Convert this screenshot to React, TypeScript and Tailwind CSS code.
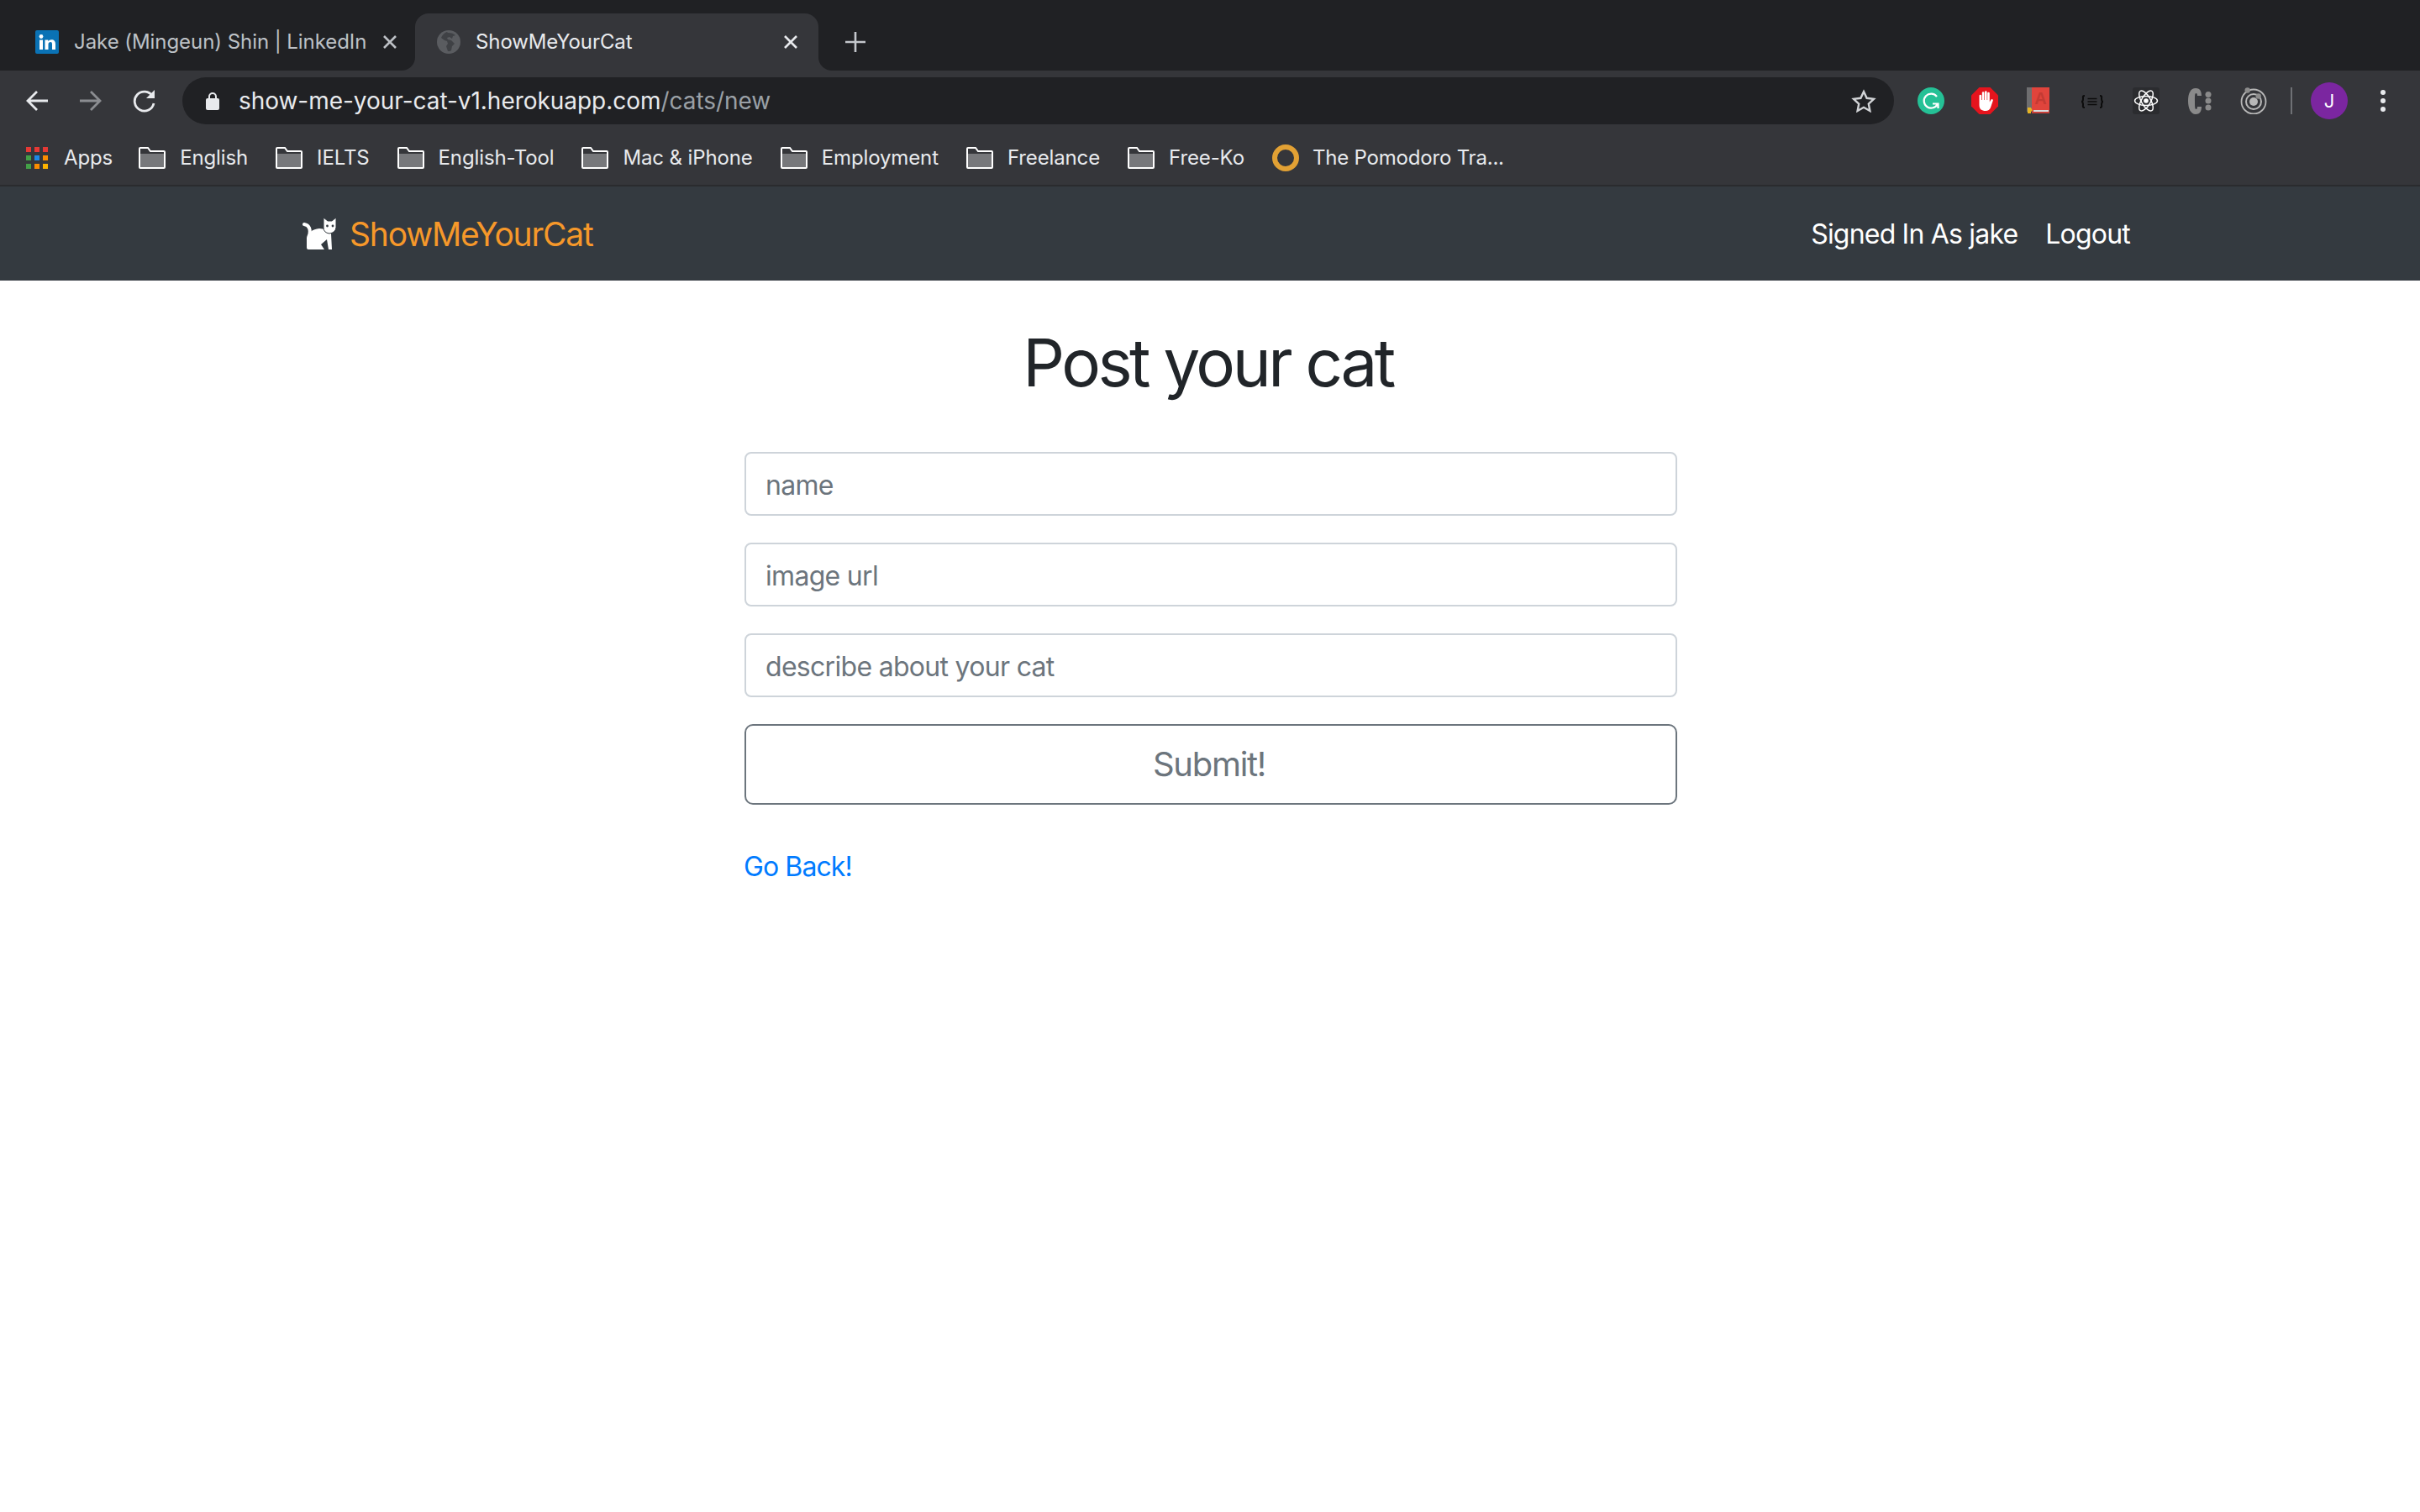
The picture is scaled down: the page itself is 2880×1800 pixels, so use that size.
import React from "react";

const bookmarks = ["English", "IELTS", "English-Tool", "Mac & iPhone", "Employment", "Freelance", "Free-Ko"];

const appsColors = [
  "bg-[#e53935]", "bg-[#e53935]", "bg-[#e53935]",
  "bg-[#43a047]", "bg-[#1e88e5]", "bg-[#fb8c00]",
  "bg-[#43a047]", "bg-[#fb8c00]", "bg-[#fdb300]",
];

const CloseIcon = ({ className }: { className: string }) => (
  <svg width="18" height="18" viewBox="0 0 18 18" className={className} fill="none" stroke="currentColor" strokeWidth="2.6">
    <path d="M2 2l14 14M16 2L2 16" />
  </svg>
);

const FolderIcon = () => (
  <svg width="32" height="26" viewBox="0 0 32 26" className="shrink-0">
    <path d="M1 24V2a1 1 0 0 1 1-1h9l3 4h16a1 1 0 0 1 1 1v18a1 1 0 0 1-1 1H2a1 1 0 0 1-1-1z" fill="#35363a" stroke="#fff" strokeWidth="2" />
    <rect x="2" y="8" width="28" height="16" fill="#77787b" />
  </svg>
);

const CatLogo = () => (
  <svg width="40" height="39" viewBox="0 0 40 39" className="shrink-0">
    <path d="M2 8c6 1 8 6 6 14" fill="none" stroke="#fff" strokeWidth="4" strokeLinecap="round" />
    <path d="M5 36V24c1-6 7-10 15-11l8 1 6 5 1 19h-4l-2-12-7 6 4 6H7q-2 0-2-2z" fill="#fff" />
    <path d="M25 0l5 4h5l5-4v12q-1 6-8 7-7-1-7-7z" fill="#fff" stroke="#343a40" strokeWidth="1" />
    <circle cx="29.5" cy="10" r="1.4" fill="#343a40" />
    <circle cx="36" cy="10" r="1.4" fill="#343a40" />
  </svg>
);

const ExtensionIcons = () => (
  <div className="flex items-center gap-[32px]">
    {/* grammarly */}
    <svg width="32" height="32" viewBox="0 0 32 32">
      <circle cx="16" cy="16" r="16" fill="#25c196" />
      <path d="M23 11A8.500 8.500 0 1 0 24 19.500M18 19.500h6.500V25" fill="none" stroke="#fff" strokeWidth="2.200" />
    </svg>
    {/* adblock */}
    <svg width="32" height="32" viewBox="0 0 32 32">
      <path d="M9.5 0h13L32 9.500v13L22.500 32h-13L0 22.500v-13z" fill="#e5141d" />
      <path d="M9.500 10a1.300 1.300 0 0 1 2.600 0v5h.7V6.500a1.300 1.300 0 0 1 2.600 0V15h.6V5.500a1.300 1.300 0 0 1 2.600 0V15h.6V7a1.300 1.300 0 0 1 2.600 0v10.500l1.800-3a1.300 1.300 0 0 1 2.200 1.300L23 24c-1 2.500-3 4-6 4-4.500 0-7.500-2-7.500-7z" fill="#fff" />
    </svg>
    {/* dictionary book */}
    <svg width="32" height="32" viewBox="0 0 32 32">
      <rect x="2" y="0" width="6" height="29" fill="#6e6e70" />
      <rect x="8" y="0" width="21" height="28" fill="#e0443c" />
      <rect x="8" y="27" width="21" height="4" fill="#c9403a" />
      <rect x="10" y="27" width="18" height="2" fill="#d8dde0" />
      <text x="18.500" y="20" textAnchor="middle" fontSize="20" fontWeight="700" fill="#c43a33" fontFamily="Liberation Sans, sans-serif">A</text>
      <path d="M3 24h4l2 4-2 .5V31H3z" fill="#e6b422" />
    </svg>
    {/* braces */}
    <svg width="32" height="32" viewBox="0 0 32 32" fill="none" stroke="#0c0c0c">
      <path d="M7 10c-3 0-2 2-2 3.500S5 17 3 17c2 0 2 2 2 3.500S4 24 7 24M25 10c3 0 2 2 2 3.500s0 3.500 2 3.500c-2 0-2 2-2 3.500s1 3.500-2 3.500" strokeWidth="2" />
      <path d="M10.500 13.500h11M10.500 17h11M10.500 20.500h11" strokeWidth="1.700" />
    </svg>
    {/* react */}
    <div className="flex h-8 w-8 items-center justify-center rounded-[3px] bg-[#2b2c2f]">
      <svg width="30" height="30" viewBox="0 0 30 30" fill="none" stroke="#fff" strokeWidth="1.500">
        <ellipse cx="15" cy="15" rx="13.500" ry="5.500" />
        <ellipse cx="15" cy="15" rx="13.500" ry="5.500" transform="rotate(60 15 15)" />
        <ellipse cx="15" cy="15" rx="13.500" ry="5.500" transform="rotate(120 15 15)" />
        <circle cx="15" cy="15" r="2.800" fill="#fff" stroke="none" />
      </svg>
    </div>
    {/* c: */}
    <svg width="32" height="32" viewBox="0 0 32 32" fill="#8a8a8a">
      <path d="M18 10C18 6 17 1 11 1 5 1 2 7 2 16s3 16 9 16c6 0 7-5 7-9h-5c0 2-.5 3-1.500 3C10 26 10 22 10 16s0-9 1.500-9c1 0 1.500 1 1.500 3z" />
      <circle cx="26" cy="8.500" r="3.500" />
      <circle cx="26" cy="16" r="3.500" />
      <circle cx="26" cy="24" r="3.500" />
    </svg>
    {/* ion */}
    <svg width="32" height="32" viewBox="0 0 32 32" fill="none" stroke="#b8b8b8">
      <circle cx="16" cy="17" r="14.500" strokeWidth="1.800" />
      <circle cx="16" cy="17" r="9" strokeWidth="2" />
      <circle cx="16" cy="17" r="5" fill="#b8b8b8" stroke="none" />
      <circle cx="8.700" cy="3.500" r="3.200" fill="#8d8d8d" stroke="none" />
      <circle cx="21.700" cy="10.500" r="3.200" fill="#8d8d8d" stroke="none" />
    </svg>
  </div>
);

const BrowserChrome = () => (
  <div className="text-[24px]">
    {/* tab strip */}
    <div className="flex h-[84px] items-end bg-[#202124]">
      <div className="flex h-[68px] w-[494px] items-center pl-[42px] pr-[21px] text-[#bdc1c6]">
        <svg width="28" height="28" viewBox="0 0 28 28" className="shrink-0">
          <rect width="28" height="28" rx="2" fill="#0a72b5" />
          <circle cx="7" cy="7.500" r="2.400" fill="#fff" />
          <path d="M5 11.500h4V23H5zM11.500 11.500h3.800v1.700c.7-1.200 2.100-2 3.900-2 3.300 0 4.800 2 4.800 5.400V23h-4v-6.500c0-1.700-.6-2.500-1.900-2.500-1.500 0-2.600 1-2.600 2.800V23h-4z" fill="#fff" />
        </svg>
        <span className="ml-[18px] whitespace-nowrap tracking-[-0.06px]">Jake (Mingeun) Shin | LinkedIn</span>
        <CloseIcon className="ml-auto shrink-0" />
      </div>
      <div className="relative flex h-[68px] w-[480px] items-center rounded-t-[16px] bg-[#35363a] pl-[26px] pr-[24px] text-[#e8eaed]">
        <div className="absolute -left-4 bottom-0 h-4 w-4 bg-[#35363a]">
          <div className="h-4 w-4 rounded-br-[16px] bg-[#202124]" />
        </div>
        <div className="absolute -right-4 bottom-0 h-4 w-4 bg-[#35363a]">
          <div className="h-4 w-4 rounded-bl-[16px] bg-[#202124]" />
        </div>
        <svg width="28" height="28" viewBox="0 0 28 28" className="shrink-0">
          <circle cx="14" cy="14" r="14" fill="#5a5c60" />
          <path d="M12 2c-3 1-6 4-7 7l4 3 3 1 1 3-2 3 2 6c2 0 3 0 4-1l1-5 3-3-4-4-4-1-1-2 3-1 3 2 1-3 3-1c-2-2-5-3-9-3z" fill="#3f4145" />
        </svg>
        <span className="ml-[18px] whitespace-nowrap tracking-[-0.1px]">ShowMeYourCat</span>
        <CloseIcon className="ml-auto shrink-0" />
      </div>
      <svg width="24" height="24" viewBox="0 0 24 24" className="mb-[22px] ml-[32px] text-[#c4c7cc]" fill="none" stroke="currentColor" strokeWidth="2.600">
        <path d="M12 0v24M0 12h24" />
      </svg>
    </div>

    {/* toolbar */}
    <div className="flex h-[64px] bg-[#35363a] pl-[30px] pr-[41px] pt-[8px]">
      <div className="flex h-[56px] items-center gap-[36px]">
        <svg width="28" height="26" viewBox="0 0 28 26" fill="none" stroke="#e8eaed" strokeWidth="2.800">
          <path d="M27 13H3M14 2L3 13l11 11" />
        </svg>
        <svg width="28" height="26" viewBox="0 0 28 26" fill="none" stroke="#8b8d91" strokeWidth="2.800">
          <path d="M1 13h24M14 2l11 11-11 11" />
        </svg>
        <svg width="28" height="28" viewBox="0 0 28 28" fill="none" stroke="#e8eaed" strokeWidth="2.800">
          <path d="M23.500 8.500A11.500 11.500 0 1 0 25 17" />
          <path d="M26 1v10H16z" fill="#e8eaed" stroke="none" />
        </svg>
      </div>
      <div className="ml-[31px] flex h-[56px] flex-1 items-center rounded-full bg-[#202124] pl-[28px] pr-[21px]">
        <svg width="16" height="22" viewBox="0 0 16 22" className="shrink-0" fill="#e8eaed">
          <path d="M3 9V6a5 5 0 0 1 10 0v3h-2V6a3 3 0 0 0-6 0v3z" />
          <rect y="8" width="16" height="14" rx="2" />
        </svg>
        <span className="ml-[23px] whitespace-nowrap text-[28px] tracking-[-0.04px] text-[#e8eaed]">
          show-me-your-cat-v1.herokuapp.com<span className="text-[#9aa0a6]">/cats/new</span>
        </span>
        <svg width="30" height="28" viewBox="0 0 30 28" className="ml-auto shrink-0" fill="none" stroke="#d2d4d7" strokeWidth="2.400">
          <path d="M15 3l3.600 7.800 8.400 1-6.200 5.800 1.600 8.400L15 21.800 7.600 26l1.600-8.400L3 11.800l8.400-1z" />
        </svg>
      </div>
      <div className="ml-[28px] flex h-[56px] items-center">
        <ExtensionIcons />
        <div className="ml-[28px] h-8 w-[2px] bg-[#6f7175]" />
        <div className="ml-[22px] flex h-[44px] w-[44px] items-center justify-center rounded-full bg-[#7b26a0] text-[22px] text-white">J</div>
        <div className="ml-[39px] flex flex-col gap-[4px]">
          <div className="h-[6px] w-[6px] rounded-full bg-[#e8eaed]" />
          <div className="h-[6px] w-[6px] rounded-full bg-[#e8eaed]" />
          <div className="h-[6px] w-[6px] rounded-full bg-[#e8eaed]" />
        </div>
      </div>
    </div>

    {/* bookmarks bar */}
    <div className="flex h-[72px] items-center bg-[#35363a] pl-[31px] pt-[7px] tracking-[-0.12px] text-[#e8eaed]">
      <div className="grid w-[26px] shrink-0 grid-cols-3 gap-[4px]">
        {appsColors.map((color, i) => (
          <div key={i} className={`h-[6px] w-[6px] ${color}`} />
        ))}
      </div>
      <span className="ml-[19px] mr-[31px]">Apps</span>
      <div className="flex items-center gap-[33px]">
        {bookmarks.map((name) => (
          <div key={name} className="flex items-center gap-[17px]">
            <FolderIcon />
            <span className="whitespace-nowrap">{name}</span>
          </div>
        ))}
        <div className="flex items-center gap-[16px]">
          <div className="h-8 w-8 rounded-full border-[6px] border-[#e2a134]" />
          <span className="whitespace-nowrap tracking-[-0.2px]">The Pomodoro Tra...</span>
        </div>
      </div>
    </div>
    <div className="h-[2px] bg-[#2a2b2e]" />
  </div>
);

export default function App() {
  return (
    <div className="min-h-[1800px] bg-white font-['Inter','Liberation_Sans',sans-serif]">
      <BrowserChrome />

      <nav className="flex h-[112px] items-center justify-between bg-[#343a40] pl-[360px] pr-[345px]">
        <a className="flex items-center gap-[16px] text-[39px] tracking-[-1.2px] text-[#f6982a]">
          <CatLogo />
          <span className="pt-[2px]">ShowMeYourCat</span>
        </a>
        <div className="flex items-center gap-[33px] pt-[2px] text-[32px] tracking-[-0.8px] text-white">
          <span>Signed In As jake</span>
          <span>Logout</span>
        </div>
      </nav>

      <main className="ml-[886px] w-[1110px] pt-[50px]">
        <h1 className="pr-[7px] text-center text-[78px] font-normal leading-[96px] tracking-[-3.5px] text-[#212529]">Post your cat</h1>
        <form className="mt-[58px] flex flex-col gap-[32px]">
          <input
            type="text"
            placeholder="name"
            className="h-[76px] rounded-[8px] border-2 border-[#ced4da] px-[23px] pt-[2px] text-[32px] tracking-[-0.7px] placeholder:text-[#6c757d]"
          />
          <input
            type="text"
            placeholder="image url"
            className="h-[76px] rounded-[8px] border-2 border-[#ced4da] px-[23px] pt-[2px] text-[32px] tracking-[-0.7px] placeholder:text-[#6c757d]"
          />
          <input
            type="text"
            placeholder="describe about your cat"
            className="h-[76px] rounded-[8px] border-2 border-[#ced4da] px-[23px] pt-[2px] text-[32px] tracking-[-0.7px] placeholder:text-[#6c757d]"
          />
          <button
            type="button"
            className="h-[96px] rounded-[10px] border-2 border-[#6c757d] pr-[4px] text-[40px] tracking-[-1.3px] text-[#6c757d]"
          >
            Submit!
          </button>
        </form>
        <a className="-ml-[1px] mt-[50px] block text-[32px] leading-[48px] tracking-[-0.9px] text-[#007bff]">Go Back!</a>
      </main>
    </div>
  );
}
